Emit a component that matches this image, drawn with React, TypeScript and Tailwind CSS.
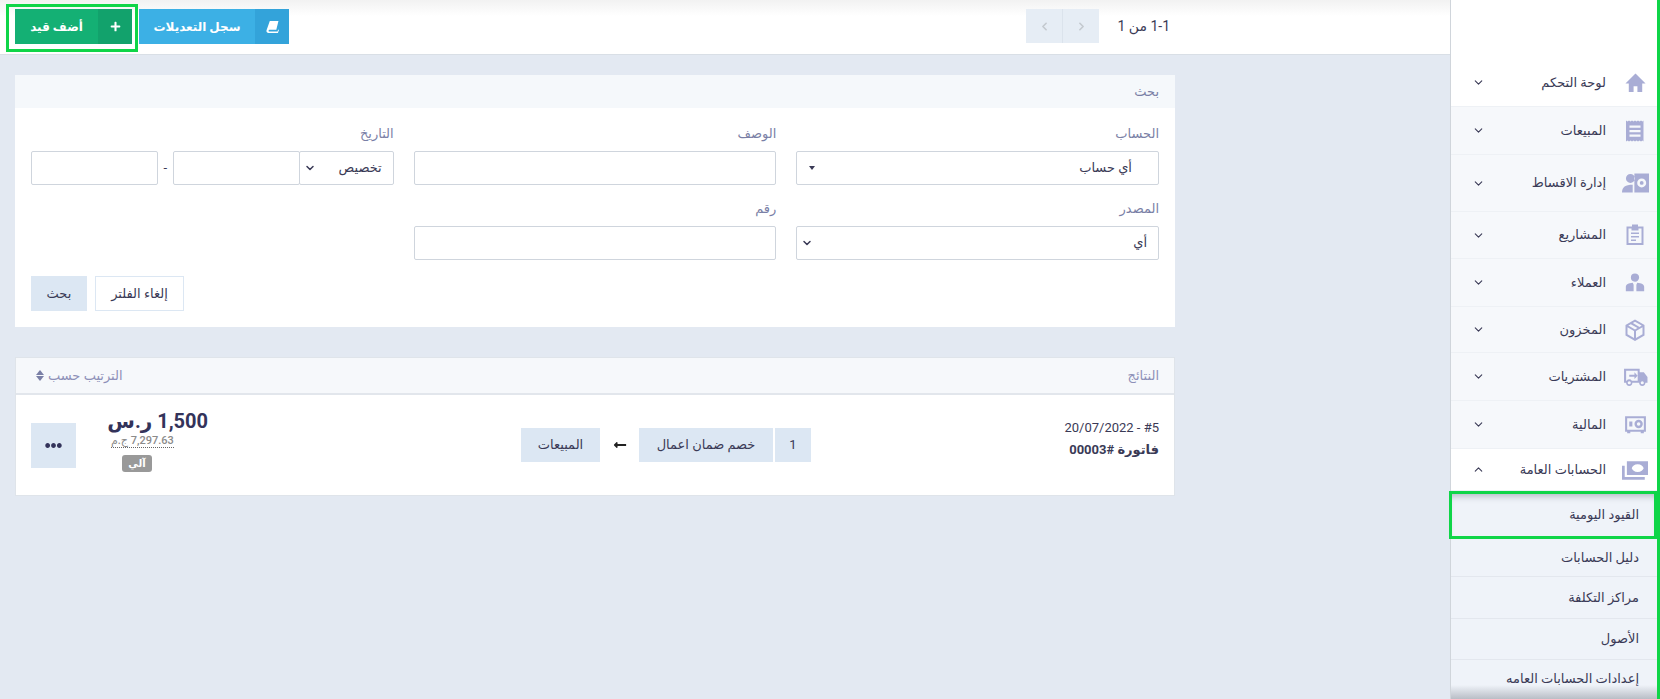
import { ChevronDown, ChevronLeft, ChevronRight, ChevronUp } from 'lucide-react'
import { FaEllipsisH, FaLongArrowAltLeft, FaPlus } from 'react-icons/fa'
import type { ReactNode } from 'react'

const Ic = ({ w, children }: { w: string; children: ReactNode }) => (
  <svg viewBox="0 0 24 24" className={`fill-[#a9add5] ${w}`}>
    {children}
  </svg>
)

const ICONS: Record<string, ReactNode> = {
  home: <Ic w="h-[23px] w-[23px]"><path d="M12 2.500 1.500 13H5v9h5v-6h4v6h5v-9h3.500z" /></Ic>,
  sales: <Ic w="h-[24px] w-[24px]"><path fillRule="evenodd" d="M3 1.500l1.500 1 1.500-1 1.500 1 1.500-1 1.500 1 1.500-1 1.500 1 1.500-1 1.500 1 1.500-1 1.500 1 1-1v21l-1-1-1.500 1-1.500-1-1.500 1-1.500-1-1.500 1-1.500-1-1.500 1-1.500-1-1.500 1-1.500-1-1.500 1zM6.500 6.500v2.200h11V6.500zM6.500 11v2.200h11V11zM6.500 15.500v2.200h11v-2.200z" /></Ic>,
  inst: <Ic w="h-[27px] w-[27px]"><path fillRule="evenodd" d="M7.500 3.500a4 4 0 1 1 0 8 4 4 0 0 1 0-8zM0 20c0-5 3-7 9.500-7v7zM11 3h13v17H11zM17.500 7.500a4 4 0 1 0 0 8 4 4 0 0 0 0-8zM17.500 9.800a1.700 1.700 0 1 1 0 3.400 1.700 1.700 0 0 1 0-3.400z" /></Ic>,
  proj: <Ic w="h-[24px] w-[24px]"><path fillRule="evenodd" d="M9 1.500h6V3.500h5.500V22h-17V3.500H9zM5.500 5.500v14.500h13V5.500h-3V7.500h-7V5.500zM8 9.500h8v1.600H8zM8 13h8v1.600H8zM8 16.500h5v1.600H8z" /></Ic>,
  cust: <Ic w="h-[22px] w-[22px]"><path fillRule="evenodd" d="M12 1.500a4.500 4.500 0 1 1 0 9 4.500 4.500 0 0 1 0-9zM2 21v-5c0-2.500 3-4 7.500-4.300l1 2.300v7zM13.500 21v-7l1-2.300c4.500.3 7.500 1.800 7.500 4.300v5z" /></Ic>,
  box: <Ic w="h-[24px] w-[24px]"><path fillRule="evenodd" d="M12 1.500 21.500 7v10.500L12 23l-9.500-5.500V7zM12 3.800 9.800 5l6.700 3.900 2.200-1.300zM7.800 6.200 5.300 7.600 12 11.500l2.500-1.400zM4.500 9.300v7l6.500 3.800v-7zM19.500 9.300 13 13.100v7l6.500-3.800z" /></Ic>,
  truck: <Ic w="h-[25px] w-[25px]"><path fillRule="evenodd" d="M1 4.500h15V8h4l3.500 4.500V18h-2a3 3 0 0 1-6 0H9a3 3 0 0 1-6 0H1zM3 6.500V16h.5a3 3 0 0 1 5 0h5.600V6.500zM6 8.800v1.600h5V8l3 3.200-3 3.200v-2.200H6zM6 16.500a1.500 1.500 0 1 0 0 3 1.500 1.500 0 0 0 0-3zM18.500 16.500a1.500 1.500 0 1 0 0 3 1.500 1.500 0 0 0 0-3z" /></Ic>,
  safe: <Ic w="h-[25px] w-[25px]"><path fillRule="evenodd" d="M2 4h20v15h-2v1.500h-3V19H7v1.500H4V19H2zM4 6v11h16V6zM6 9h3v5H6zM15 7.500a4 4 0 1 1 0 8 4 4 0 0 1 0-8zM15 9.800a1.700 1.700 0 1 0 0 3.400 1.700 1.700 0 0 0 0-3.400z" /></Ic>,
  money: <Ic w="h-[26px] w-[26px]"><path fillRule="evenodd" d="M4.500 4H24v12.500H4.500zM14.500 6.800c-3 0-5 2-5.500 3.500.5 1.500 2.500 3.500 5.500 3.500s5-2 5.500-3.500c-.5-1.500-2.500-3.500-5.500-3.500zM0 8h2.500v10.500H21v2.500H0z" /></Ic>,
}

const MENU = [
  { label: 'لوحة التحكم', icon: 'home', cls: 'h-[48px] bg-white' },
  { label: 'المبيعات', icon: 'sales', cls: 'h-[48px] bg-[#f6f8fb]' },
  { label: 'إدارة الاقساط', icon: 'inst', cls: 'h-[57px] bg-[#f6f8fb]' },
  { label: 'المشاريع', icon: 'proj', cls: 'h-[47px] bg-[#f6f8fb]' },
  { label: 'العملاء', icon: 'cust', cls: 'h-[48px] bg-[#f6f8fb]' },
  { label: 'المخزون', icon: 'box', cls: 'h-[46px] bg-[#f6f8fb]' },
  { label: 'المشتريات', icon: 'truck', cls: 'h-[48px] bg-[#f6f8fb]' },
  { label: 'المالية', icon: 'safe', cls: 'h-[48px] bg-[#f6f8fb]' },
]

const SUB = [
  { label: 'دليل الحسابات', cls: 'h-[38px]' },
  { label: 'مراكز التكلفة', cls: 'h-[42px]' },
  { label: 'الأصول', cls: 'h-[41px]' },
  { label: 'إعدادات الحسابات العامه', cls: 'h-[39px]' },
]

function MenuRow({ label, icon, cls, open }: { label: string; icon: string; cls: string; open?: boolean }) {
  return (
    <div className={`flex shrink-0 items-center border-b border-[#eef1f5] ${cls}`}>
      <div className="flex w-[44px] shrink-0 justify-center">{ICONS[icon]}</div>
      <span className="mr-[7px] flex-1 text-[13px] font-medium text-[#3a3a56]">{label}</span>
      {open ? (
        <ChevronUp size={13} strokeWidth={2} className="ml-[21px] text-[#3a3a56]" />
      ) : (
        <ChevronDown size={13} strokeWidth={2} className="ml-[21px] text-[#3a3a56]" />
      )}
    </div>
  )
}

function Sidebar() {
  return (
    <aside className="relative flex h-[699px] w-[210px] shrink-0 flex-col border-r-[3px] border-l border-r-[#0fd548] border-l-[#d0d5db] bg-white">
      <div className="h-[59px] shrink-0" />
      {MENU.map((m) => (
        <MenuRow key={m.label} {...m} />
      ))}
      <MenuRow label="الحسابات العامة" icon="money" cls="h-[42px] bg-white" open />
      <div className="-ml-[2px] flex h-[48px] shrink-0 items-center border-[3px] border-[#0fd548] bg-[#eff3f9] pr-[15px] text-[13px] font-medium text-[#3a3a56] shadow-[inset_0_7px_7px_-5px_rgba(60,70,90,0.35)]">
        القيود اليومية
      </div>
      {SUB.map((s) => (
        <div key={s.label} className={`flex shrink-0 items-center border-b border-[#e3e7ee] bg-[#eff3f9] pr-[18px] text-[13px] font-medium text-[#3a3a56] ${s.cls}`}>
          {s.label}
        </div>
      ))}
      <div className="pointer-events-none absolute inset-x-0 bottom-0 h-[14px] bg-gradient-to-b from-transparent to-[#b9bec6]" />
    </aside>
  )
}

function Label({ children }: { children: ReactNode }) {
  return <label className="mb-[8px] block h-[18px] text-[13px] leading-[18px] font-medium text-[#7a7fa6]">{children}</label>
}

const fieldCls = 'h-[34px] rounded-[2px] border border-[#cfd5dd] bg-white'

function SearchCard() {
  return (
    <section className="mt-[20px] h-[252px] bg-white">
      <div className="flex h-[33px] items-center bg-[#f5f8fb] pr-[16px] text-[13px] font-medium text-[#7a7fa6]">بحث</div>
      <div className="px-[16px] pt-[17px]">
        <div className="grid grid-cols-3 gap-x-[20px] gap-y-[15px]">
          <div>
            <Label>الحساب</Label>
            <div className={`${fieldCls} flex items-center justify-between pr-[26px] pl-[12px] text-[13px] text-[#3a3a56]`}>
              <span>أي حساب</span>
              <span className="h-0 w-0 border-x-[3.500px] border-t-[4px] border-x-transparent border-t-[#3a3a56]" />
            </div>
          </div>
          <div>
            <Label>الوصف</Label>
            <input className={`${fieldCls} block w-full`} />
          </div>
          <div>
            <Label>التاريخ</Label>
            <div className="flex items-center">
              <div className={`${fieldCls} flex w-[95px] shrink-0 items-center justify-between pr-[11px] pl-[4px] text-[13px] text-[#3a3a56]`}>
                <span>تخصيص</span>
                <ChevronDown size={12} strokeWidth={3} />
              </div>
              <input className={`${fieldCls} -mr-px block w-[127px] min-w-0`} />
              <span className="w-[15px] shrink-0 text-center text-[13px] text-[#3a3a56]">-</span>
              <input className={`${fieldCls} block w-[127px] min-w-0`} />
            </div>
          </div>
          <div>
            <Label>المصدر</Label>
            <div className={`${fieldCls} flex items-center justify-between pr-[11px] pl-[4px] text-[13px] text-[#3a3a56]`}>
              <span>أي</span>
              <ChevronDown size={12} strokeWidth={3} />
            </div>
          </div>
          <div>
            <Label>رقم</Label>
            <input className={`${fieldCls} block w-full`} />
          </div>
        </div>
        <div className="mt-[16px] flex justify-end gap-[8px]">
          <button className="h-[35px] w-[89px] border border-[#dce7f3] bg-white text-[13px] text-[#3a3a56]">إلغاء الفلتر</button>
          <button className="h-[35px] w-[56px] bg-[#dce7f3] text-[13px] text-[#3a3a56]">بحث</button>
        </div>
      </div>
    </section>
  )
}

function ResultsCard() {
  return (
    <section className="mt-[30px] h-[139px] border border-[#dfe4ea] bg-white">
      <div className="flex h-[37px] items-center justify-between border-b-2 border-[#e2e6ec] bg-[#f6f8fb] pr-[15px] pl-[20px] text-[13px] text-[#8d90b8]">
        <span>النتائج</span>
        <span className="flex items-center gap-[4px] font-medium">
          الترتيب حسب
          <span className="flex flex-col gap-[1px]">
            <span className="h-0 w-0 border-x-[4.500px] border-b-[5px] border-x-transparent border-b-[#7a7fa6]" />
            <span className="h-0 w-0 border-x-[4.500px] border-t-[5px] border-x-transparent border-t-[#7a7fa6]" />
          </span>
        </span>
      </div>
      <div className="flex h-[100px] items-center pr-[15px] pl-[15px]">
        <div className="w-[348px] shrink-0 self-start pt-[23px] text-[#3a3a56]">
          <div className="h-[22px] text-[13px] leading-[20px]">
            <span dir="ltr">20/07/2022 - #5</span>
          </div>
          <div className="text-[13px] leading-[20px] font-bold">فاتورة #00003</div>
        </div>
        <div className="flex h-[34px] shrink-0 items-stretch text-[13px] text-[#3a3a56]">
          <div className="flex w-[36px] items-center justify-center bg-[#dce7f3]">1</div>
          <div className="mr-[2px] flex w-[134px] items-center justify-center bg-[#dce7f3]">خصم ضمان اعمال</div>
          <div className="flex w-[39px] items-center justify-center">
            <FaLongArrowAltLeft size={14} className="text-[#222]" />
          </div>
          <div className="flex w-[79px] items-center justify-center bg-[#dce7f3]">المبيعات</div>
        </div>
        <div className="mr-auto flex items-center gap-[35px]">
          <div className="-mt-[10px] flex w-[97px] flex-col">
            <div className="text-[20px] leading-[24px] font-bold whitespace-nowrap text-[#33335a]">1,500 ر.س</div>
            <div className="mt-[2px] self-end border-b border-dotted border-[#666] text-[11px] leading-[12px] font-medium text-[#8b8b8b]">7,297.63 ج.م</div>
            <div className="mt-[7px] ml-[11px] flex h-[17px] w-[30px] items-center justify-center self-end rounded-[3px] bg-[#999] text-[10px] font-bold text-white">آلي</div>
          </div>
          <button className="flex h-[45px] w-[45px] items-center justify-center bg-[#dce7f3] text-[#33335a]">
            <FaEllipsisH size={17} />
          </button>
        </div>
      </div>
    </section>
  )
}

export default function App() {
  return (
    <div dir="rtl" className="flex h-[699px] w-[1660px] overflow-hidden bg-[#e3e9f2] font-['Roboto','DejaVu_Sans',sans-serif]">
      <Sidebar />
      <main className="relative min-w-0 flex-1">
        <header className="flex h-[55px] items-start justify-between border-b border-[#d9dfe6] bg-gradient-to-b from-[#f2f2f2] to-white to-[16px] pt-[9px] pr-[280px] pl-[15px]">
          <div className="flex h-[34px] items-center gap-[18px]">
            <span className="text-[14px] text-[#3a3a56]">1-1 من 1</span>
            <div className="flex h-[34px] w-[73px] bg-[#e6edf5] text-[#c4c9cf]">
              <span className="flex flex-1 items-center justify-center border-l border-[#dbe3ec]">
                <ChevronRight size={13} strokeWidth={3} />
              </span>
              <span className="flex flex-1 items-center justify-center">
                <ChevronLeft size={13} strokeWidth={3} />
              </span>
            </div>
          </div>
          <div className="flex h-[35px] gap-[7px] text-[12px] font-bold text-white">
            <button className="flex w-[150px] items-stretch bg-[#3cb0e5]">
              <span className="flex w-[34px] items-center justify-center bg-[#33a3da]">
                <svg viewBox="0 0 24 24" className="h-[13px] w-[13px] fill-white">
                  <path d="M7 2h16l-4 16H6.500a1.700 1.700 0 0 0 0 3.400h14.800l1-3.400H24l-2 6H5a4 4 0 0 1-4-5z" />
                </svg>
              </span>
              <span className="flex flex-1 items-center justify-center">سجل التعديلات</span>
            </button>
            <button className="flex w-[117px] items-stretch bg-[#14b074]">
              <span className="flex w-[34px] items-center justify-center bg-[#12a26c]">
                <FaPlus size={11} />
              </span>
              <span className="flex flex-1 items-center justify-center">أضف قيد</span>
            </button>
          </div>
        </header>
        <div className="pointer-events-none absolute top-[4px] left-[6px] h-[48px] w-[132px] border-[3px] border-[#0fd548]" />
        <div className="mr-[275px] ml-[15px]">
          <SearchCard />
          <ResultsCard />
        </div>
      </main>
    </div>
  )
}
